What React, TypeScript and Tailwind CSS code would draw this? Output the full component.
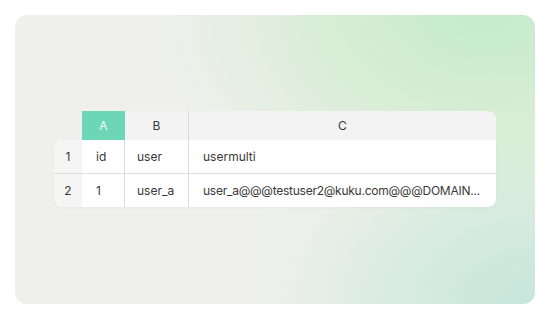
import React from "react";

export default function App() {
  return (
    <div className="w-[550px] h-[320px] bg-white p-[15px]" style={{ fontFamily: "Inter, 'Noto Sans', sans-serif" }}>
      <div className="w-[520px] h-[289px] rounded-[12px] pt-[96px] pl-[39px] bg-[radial-gradient(ellipse_75%_85%_at_90%_0%,#c4ebcc_0%,rgba(208,236,206,0.7)_40%,rgba(230,240,225,0)_85%),radial-gradient(ellipse_60%_70%_at_100%_100%,#c6e6dc_0%,rgba(205,232,222,0.5)_50%,rgba(230,240,235,0)_85%),linear-gradient(90deg,#efefee_0%,#eff0ec_45%,#e3efe0_100%)]">
        <div className="w-[442px] text-[12px] text-[#383838]">
          {/* header */}
          <div className="flex h-[29px]">
            <div className="w-[28px]" />
            <div className="flex flex-1 rounded-tr-[8px] bg-[#f3f3f3] overflow-hidden">
              <div className="w-[43px] bg-[#6dd6b5] text-white/90 flex items-center justify-center">A</div>
              <div className="w-[64px] flex items-center justify-center border-r border-[#dadada]">B</div>
              <div className="flex-1 flex items-center justify-center">C</div>
            </div>
          </div>
          {/* body */}
          <div className="rounded-tl-[8px] rounded-b-[8px] overflow-hidden bg-white shadow-[0_1px_3px_rgba(0,0,0,0.03)]">
            <div className="flex h-[34px] border-b border-[#dedede]">
              <div className="w-[28px] bg-[#f5f5f5] flex items-center justify-center">1</div>
              <div className="w-[43px] border-r border-[#dadada] flex items-center pl-[14px]">id</div>
              <div className="w-[64px] border-r border-[#dadada] flex items-center pl-[12px]">user</div>
              <div className="flex-1 min-w-0 flex items-center pl-[14px]">usermulti</div>
            </div>
            <div className="flex h-[33px]">
              <div className="w-[28px] bg-[#f5f5f5] flex items-center justify-center">2</div>
              <div className="w-[43px] border-r border-[#dadada] flex items-center pl-[14px]">1</div>
              <div className="w-[64px] border-r border-[#dadada] flex items-center pl-[12px]">user_a</div>
              <div className="flex-1 min-w-0 flex items-center pl-[14px] whitespace-nowrap tracking-[-0.25px]">
                user_a@@@testuser2@kuku.com@@@DOMAIN...
              </div>
            </div>
          </div>
        </div>
      </div>
    </div>
  );
}
